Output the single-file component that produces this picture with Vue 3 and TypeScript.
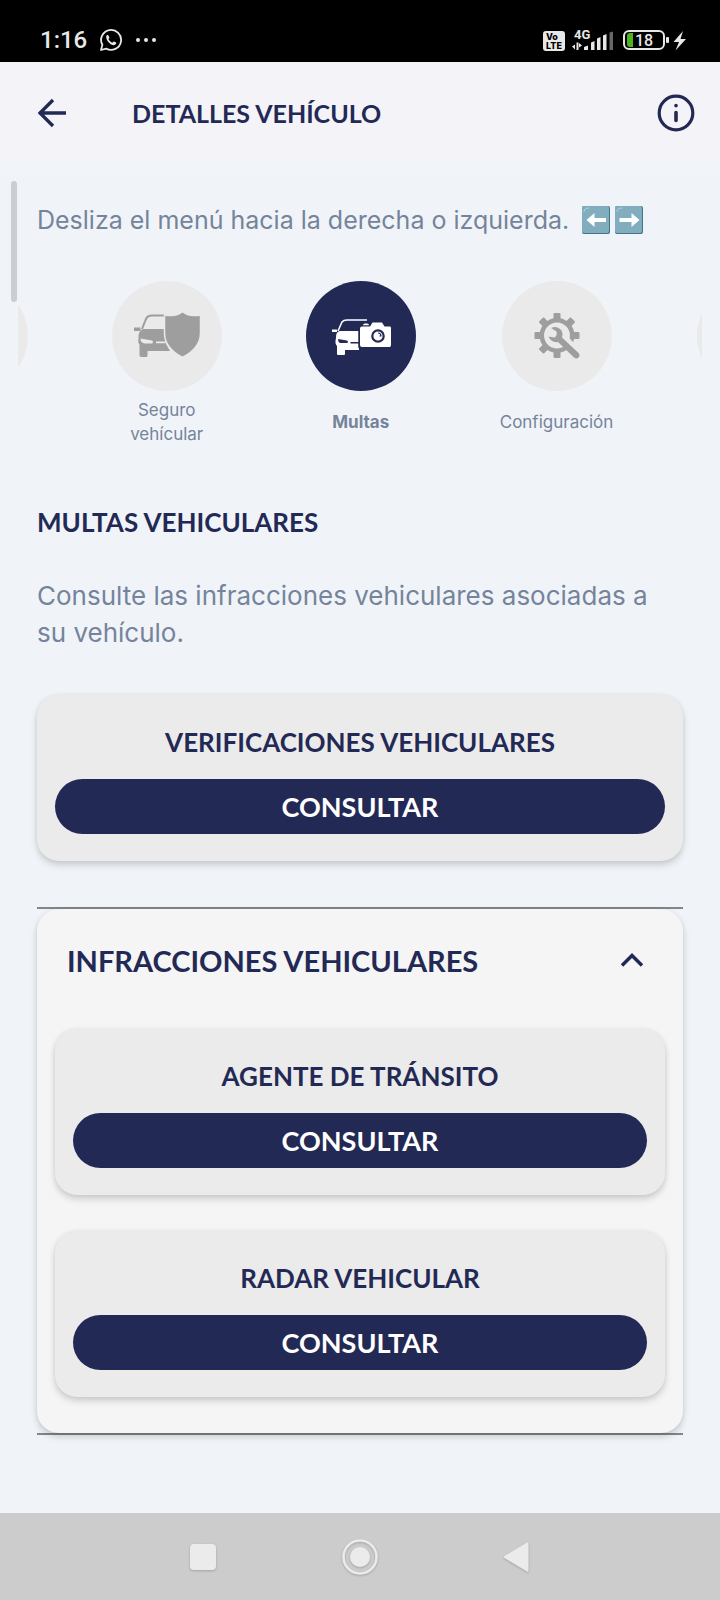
<script setup lang="ts">
import { ref } from 'vue'

interface MenuItem {
  id: string
  label: string
  icon: 'none' | 'shield' | 'camera' | 'gear'
}

const menu: MenuItem[] = [
  { id: 'previous', label: '', icon: 'none' },
  { id: 'insurance', label: 'Seguro vehícular', icon: 'shield' },
  { id: 'fines', label: 'Multas', icon: 'camera' },
  { id: 'settings', label: 'Configuración', icon: 'gear' },
  { id: 'next', label: '', icon: 'none' },
]

const active = ref('fines')
const open = ref(true)
const infractions = ['AGENTE DE TRÁNSITO', 'RADAR VEHICULAR']
const teeth = [0, 45, 90, 180, 225, 270, 315]
</script>

<template>
  <div class="screen">
    <div class="status">
      <div class="status-side">
        <span class="clock">1:16</span>
        <svg width="24" height="24" viewBox="0 0 24 24" aria-hidden="true">
          <path d="M2 22 L3.4 16.8 A10 10 0 1 1 7.2 20.6 Z" fill="none" stroke="#e8e8e8" stroke-width="1.8" stroke-linejoin="round" />
          <path d="M7.2 8.2 C7.6 7 9 6.700 9.400 7.400 L10.400 9.600 C10.500 10.200 9.700 10.900 9.500 11.300 C10.300 12.900 11.600 14 13.200 14.700 C13.800 14.400 14.300 13.400 14.900 13.500 L17.200 14.600 C17.500 15.900 16.300 17 15 17.200 C11.300 17.200 6.900 12.500 7.200 8.200 Z" fill="#e8e8e8" />
        </svg>
        <svg width="22" height="6" viewBox="0 0 22 6" aria-hidden="true" fill="#e8e8e8">
          <circle cx="3" cy="3" r="2" /><circle cx="11" cy="3" r="2" /><circle cx="19" cy="3" r="2" />
        </svg>
      </div>
      <svg class="signals" width="146" height="26" viewBox="0 0 146 26" role="img" aria-label="VoLTE, 4G, 18%">
        <rect x="1" y="4" width="22" height="20" rx="3" fill="#e8e8e8" />
        <g font-family="Inter, sans-serif" font-weight="800" fill="#000">
          <text x="4" y="13" font-size="9">Vo</text>
          <text x="4" y="22" font-size="9">LTE</text>
        </g>
        <text x="32" y="12" font-family="Roboto, sans-serif" font-weight="700" font-size="13" fill="#e8e8e8">4G</text>
        <g fill="#e8e8e8">
          <path d="M30 19.500l3-2v5zM34.500 15.500h2v7.500h-2zM37 16l3 2.500-3 2zM42 20l4-1.500V23h-4z" />
          <path d="M49 15.500l3.500-1.500V23H49zM55 11.500l3.500-1.500V23H55zM61 8.500L64.500 7V23H61z" />
          <path d="M67.500 5.500L71 4.500V23h-3.500z" fill="#666" />
        </g>
        <rect x="82" y="4" width="40" height="18" rx="5" fill="none" stroke="#e8e8e8" stroke-width="2" />
        <path d="M88 6h3v14h-3a3 3 0 0 1-3-3V9a3 3 0 0 1 3-3z" fill="#4fb41c" />
        <text x="93" y="19" font-family="Roboto, sans-serif" font-size="16" font-weight="500" fill="#e8e8e8">18</text>
        <rect x="124" y="10" width="3" height="6" rx="1" fill="#e8e8e8" />
        <path d="M141 4 L131.500 15h5.500l-3.500 8.500L144 12h-5.500z" fill="#e8e8e8" />
      </svg>
    </div>

    <header class="topbar">
      <button class="icon-button" type="button" aria-label="Volver">
        <svg width="30" height="30" viewBox="0 0 30 30" fill="none" stroke="#232955" stroke-width="3.300">
          <path d="M29 15H2M16 2 3 15l13 13" />
        </svg>
      </button>
      <h1>DETALLES VEHÍCULO</h1>
      <button class="icon-button" type="button" aria-label="Información">
        <svg width="38" height="38" viewBox="0 0 38 38" fill="none" stroke="#232955" stroke-width="3.200">
          <circle cx="19" cy="19" r="16.800" />
          <path d="M19 18.500v8M19 11.600v.2" stroke-width="3.600" stroke-linecap="round" />
        </svg>
      </button>
    </header>

    <main>
      <span class="scroll-thumb" />
      <p class="hint">
        <span>Desliza el menú hacia la derecha o izquierda.</span>
        <svg width="64" height="30" viewBox="0 0 64 30" role="img" aria-label="⬅️➡️">
          <g v-for="x in [0, 33]" :key="x">
            <rect :x="x + 1" y="1" width="28" height="28" rx="2" fill="#3f7787" />
            <rect :x="x + 1" y="1" width="27" height="27" rx="2" fill="#82adbf" />
            <path :d="`M${x + 3} 7q0-4 5-4`" fill="none" stroke="#b4d2dc" stroke-width="1" />
          </g>
          <path d="M5.500 15l8-7v5h11.500v4H13.500v5z" fill="#fff" />
          <path d="M58.500 15l-8-7v5H38.500v4h12v5z" fill="#fff" />
        </svg>
      </p>

      <nav class="carousel" aria-label="Menú del vehículo">
        <button
          v-for="item in menu"
          :key="item.id"
          class="item"
          :class="{ active: item.id === active }"
          type="button"
          :aria-label="item.label || item.id"
          @click="active = item.id"
        >
          <span class="disc">
            <svg v-if="item.icon === 'shield'" width="80" height="70" viewBox="0 0 80 70" fill="currentColor">
              <path d="M15 28 L19 18 Q20.500 14.500 25 14.500 L38 14.500" fill="none" stroke="currentColor" stroke-width="2" />
              <path d="M7 26.500h6.500v3.500h-6.500z M11.500 37 Q11 30 16 28 H38 V50 H20.500 V54.500 Q20.500 56 19 56 H14 Q12.500 56 12.500 54 V44 Q10.500 41 11.500 37 Z M38 41 L43 50 H38Z" />
              <path d="M13.500 37.500 L25 39.500 Q27 41 25 42.500 H18 Q13.500 42 13.500 37.500Z M29 40.500h9v1.800h-9z" fill="#eaeaea" />
              <path d="M37.500 14 Q50 16 55.500 10.500 Q61 16 73.500 14 V32 Q73.500 47 55.500 56.500 Q37.500 47 37.500 32 Z" stroke="#eaeaea" stroke-width="1.500" />
            </svg>
            <svg v-else-if="item.icon === 'camera'" width="80" height="70" viewBox="0 0 80 70" fill="currentColor">
              <path d="M17 30 L21 21 Q22.500 19 26 19 H46" fill="none" stroke="currentColor" stroke-width="1.500" />
              <path d="M11 28.500h5v2.500h-5z M15 37 Q14.500 31 19 30 H38 V49 H24 V53 Q24 54 23 54 H17 Q16 54 16 53 V45 Q13.500 42 15 37 Z" />
              <path d="M17 38 L26 39.500 Q28 41 26 42 H19 Q17 41 17 38Z M29.500 41h9v1.500h-9z" fill="#232955" />
              <path d="M38 27v19q0 1 1 1" fill="none" stroke="#232955" stroke-width="1.500" />
              <path d="M42 24.300 Q42 22.500 44 22.500 H46 Q48 22.500 48 24.300Z" />
              <path d="M41 25.500 H49 L51.500 21.500 H61 L63.500 25.500 H69 Q70 25.500 70 27 V44 Q70 46 68.500 46 H41 Q39 46 39 44 V27.500 Q39 25.500 41 25.500Z" />
              <circle cx="57" cy="35" r="5.700" fill="none" stroke="#232955" stroke-width="2.200" />
              <path d="M57 32a3 3 0 0 1 3 3h-1.500" fill="none" stroke="#232955" stroke-width="1.200" />
            </svg>
            <svg v-else-if="item.icon === 'gear'" width="80" height="70" viewBox="0 0 80 70" fill="currentColor">
              <g transform="translate(40 34.500)">
                <rect v-for="a in teeth" :key="a" x="-3.500" y="-22.500" width="7" height="9" rx="1" :transform="`rotate(${a})`" />
                <circle r="15.200" fill="none" stroke="currentColor" stroke-width="4.500" />
              </g>
              <path d="M45 37 L60 52" stroke="#eaeaea" stroke-width="10" fill="none" />
              <path d="M34 27 Q40 24 44.500 29.500 Q46.500 33 45 36.500 L61.500 52 Q63.500 54.500 61.500 56.500 Q59.500 58.500 57 56.500 L41 41 Q34.500 42 31.500 35.500 L37.500 36.500 Q40.500 34.500 39.500 30.500 Z" />
            </svg>
          </span>
          <span class="label">{{ item.label }}</span>
        </button>
      </nav>

      <section class="content">
        <h2>MULTAS VEHICULARES</h2>
        <p class="intro">Consulte las infracciones vehiculares asociadas a su vehículo.</p>

        <article class="card">
          <h3>VERIFICACIONES VEHICULARES</h3>
          <button class="primary" type="button">CONSULTAR</button>
        </article>

        <section class="accordion">
          <div class="panel">
            <button class="accordion-head" type="button" :aria-expanded="open" @click="open = !open">
              <span>INFRACCIONES VEHICULARES</span>
              <svg width="24" height="16" viewBox="0 0 24 16" fill="none" stroke="#232955" stroke-width="3.500">
                <path :d="open ? 'M2 13.500 12 3.500l10 10' : 'M2 2.500l10 10 10-10'" />
              </svg>
            </button>
            <div v-if="open" class="cards">
              <article v-for="title in infractions" :key="title" class="card">
                <h3>{{ title }}</h3>
                <button class="primary" type="button">CONSULTAR</button>
              </article>
            </div>
          </div>
        </section>
      </section>
    </main>

    <footer class="system-nav">
      <button type="button" aria-label="Recientes">
        <svg width="40" height="40" viewBox="0 0 40 40"><rect x="7" y="7" width="26" height="26" rx="4" /></svg>
      </button>
      <button type="button" aria-label="Inicio">
        <svg width="40" height="40" viewBox="0 0 40 40">
          <circle cx="20" cy="20" r="16.500" fill="none" stroke="#ebebeb" stroke-width="2.500" />
          <circle cx="20" cy="20" r="10" />
        </svg>
      </button>
      <button type="button" aria-label="Atrás">
        <svg width="40" height="40" viewBox="0 0 40 40"><path d="M7.500 19 30 5.500q1.500-.5 1.500 1v27q0 1.500-1.500 1L7.500 21q-1-1 0-2z" /></svg>
      </button>
    </footer>
  </div>
</template>

<style>
body {
  margin: 0;
  background: #f0f4f9;
}
</style>

<style scoped>
.screen {
  display: flex;
  flex-direction: column;
  min-height: 100vh;
  background: #f0f4f9;
  color: #232955;
  font-family: Lato, "Liberation Sans", sans-serif;
}
h1, h2, h3, p {
  margin: 0;
}
button {
  border: 0;
  padding: 0;
  background: none;
  color: inherit;
  font: inherit;
  cursor: pointer;
}
svg {
  display: block;
  flex: none;
}
.status {
  box-sizing: border-box;
  height: 62px;
  padding: 18px 32px 0 40px;
  display: flex;
  justify-content: space-between;
  align-items: center;
  background: #000;
}
.status-side {
  display: flex;
  align-items: center;
  gap: 12px;
}
.clock {
  font: 500 24px/26px Roboto, sans-serif;
  color: #e8e8e8;
}
.topbar {
  box-sizing: border-box;
  height: 112px;
  padding: 0 25px 10px 37px;
  display: flex;
  align-items: center;
  background: linear-gradient(#f4f3f8 80%, #f0f4f9);
}
h1 {
  flex: 1;
  margin-left: 65px;
  font-size: 25px;
  font-weight: 700;
  line-height: 36px;
}
main {
  position: relative;
  flex: 1;
}
.scroll-thumb {
  position: absolute;
  left: 11px;
  top: 7px;
  width: 6px;
  height: 121px;
  border-radius: 3px;
  background: #cbcdd2;
}
.hint {
  padding: 28px 37px 0;
  display: flex;
  align-items: center;
  gap: 12px;
  font-family: Inter, sans-serif;
  font-size: 25px;
  line-height: 36px;
  color: #75849b;
}
.carousel {
  margin: 43px 18px 0;
  padding-left: 5px;
  display: flex;
  justify-content: center;
  gap: 84px;
  overflow: hidden;
}
.item {
  flex: none;
  min-width: 110px;
  display: flex;
  flex-direction: column;
  align-items: center;
  gap: 7px;
}
.disc {
  width: 110px;
  height: 110px;
  border-radius: 50%;
  display: flex;
  align-items: center;
  justify-content: center;
  background: #eaeaea;
  color: #9e9e9e;
}
.active .disc {
  background: #232955;
  color: #fff;
}
.label {
  display: flex;
  align-items: center;
  justify-content: center;
  width: min-content;
  height: 48px;
  font-family: Inter, sans-serif;
  font-size: 17px;
  line-height: 24px;
  color: #75849b;
}
.active .label {
  font-weight: 700;
}
.content {
  padding: 0 37px;
}
h2 {
  margin-top: 58px;
  font-size: 26px;
  font-weight: 700;
  line-height: 36px;
}
.intro {
  margin-top: 37px;
  font-family: Inter, sans-serif;
  font-size: 26px;
  line-height: 37px;
  color: #75849b;
}
.card {
  padding: 28px 18px 27px;
  border-radius: 22px;
  background: #ebebeb;
  box-shadow: 0 4px 7px rgba(0, 0, 0, 0.16), 0 0 5px rgba(0, 0, 0, 0.06);
}
.intro + .card {
  margin-top: 44px;
}
h3 {
  font-size: 26px;
  font-weight: 700;
  line-height: 38px;
  text-align: center;
}
.primary {
  display: block;
  width: 100%;
  height: 55px;
  margin-top: 18px;
  border-radius: 28px;
  background: #232955;
  color: #fff;
  font-size: 27px;
  font-weight: 700;
}
.accordion {
  margin-top: 46px;
  border-top: 2px solid #85868c;
  border-bottom: 2px solid #85868c;
}
.panel {
  padding-bottom: 36px;
  border-radius: 22px;
  background: #f5f5f5;
  box-shadow: 0 4px 7px rgba(0, 0, 0, 0.16), 0 0 5px rgba(0, 0, 0, 0.06);
}
.accordion-head {
  width: 100%;
  height: 120px;
  padding: 0 39px 18px 30px;
  display: flex;
  align-items: center;
  justify-content: space-between;
  font-size: 29px;
  font-weight: 700;
}
.cards {
  padding: 0 18px;
  display: flex;
  flex-direction: column;
  gap: 36px;
}
.system-nav {
  height: 87px;
  display: flex;
  align-items: center;
  justify-content: center;
  gap: 117px;
  background: #ccc;
}
.system-nav svg {
  fill: #ebebeb;
  filter: drop-shadow(0 1px 1px rgba(0, 0, 0, 0.2));
}
</style>
